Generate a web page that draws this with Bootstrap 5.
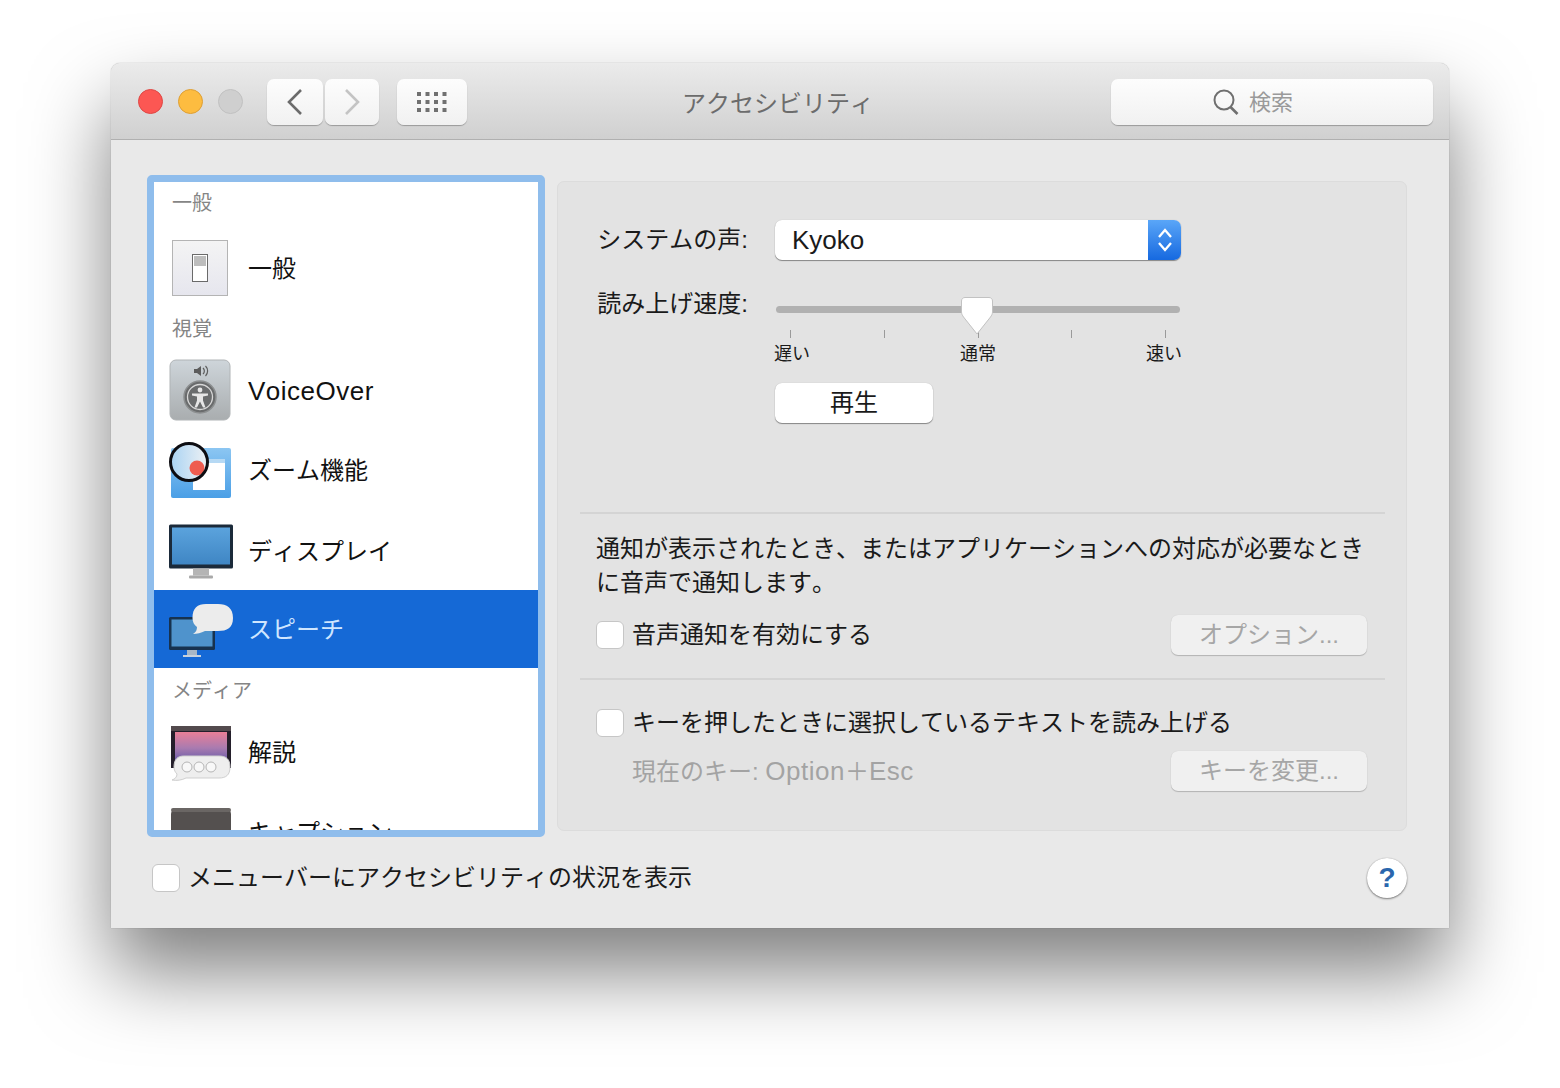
<!DOCTYPE html>
<html lang="ja">
	<head>
		<meta charset="UTF-8" />
		<meta name="viewport" content="width=device-width, initial-scale=1.0" />
		<title>アクセシビリティ</title>
		<link
			href="https://cdn.jsdelivr.net/npm/bootstrap@5.3.0/dist/css/bootstrap.min.css"
			rel="stylesheet" />
		<style>
			body {
				background: #fff;
				font-family: "Liberation Sans", "Noto Sans CJK JP", sans-serif;
				font-size: 24px;
				font-kerning: none;
				color: #1a1a1a;
				overflow: hidden;
				height: 1088px;
			}
			.mac-window {
				width: 1338px;
				height: 865px;
				margin: 63px 0 0 111px;
				background: #e9e9e9;
				border-radius: 9px 9px 0 0;
				box-shadow: 0 44px 80px rgba(0, 0, 0, 0.5), 0 0 1px rgba(0, 0, 0, 0.45);
			}
			.mac-titlebar {
				height: 77px;
				padding: 16px 16px 0 27px;
				border-radius: 9px 9px 0 0;
				background: linear-gradient(#ebebeb, #d0d0d0);
				border-bottom: 1px solid #b0b0b0;
			}
			.light {
				width: 25px;
				height: 25px;
				border-radius: 50%;
				margin-top: 10px;
				margin-right: 15px;
			}
			.light-red { background: #fc5753; border: 1px solid #df4744; }
			.light-yellow { background: #fdbc40; border: 1px solid #de9f34; }
			.light-off { background: #cfcfcf; border: 1px solid #c1c1c1; }
			.tool-btn {
				height: 46px;
				background: linear-gradient(#fdfdfd, #f1f1f1);
				border-radius: 7px;
				box-shadow: 0 1px 1px rgba(0, 0, 0, 0.28);
			}
			.tool-back { width: 56px; margin-left: 9px; }
			.tool-forward { width: 54px; margin-left: 2px; }
			.tool-grid { width: 70px; margin-left: 18px; }
			.win-title {
				padding-right: 22px;
				line-height: 50px;
				color: #6c6c6c;
			}
			.tool-search {
				width: 322px;
				padding-right: 38px;
				color: #9a9a9a;
				font-size: 22px;
				gap: 10px;
			}
			.win-body {
				padding: 35px 41px 0 36px;
			}
			.cat-box {
				width: 398px;
				height: 662px;
				border: 7px solid #8fbdec;
				border-radius: 5px;
				background: #fff;
				overflow: hidden;
			}
			.cat-head {
				font-size: 20px;
				color: #858585;
				padding-left: 18px;
				height: 42px;
				line-height: 42px;
			}
			.cat-head-first { height: 46px; line-height: 42px; }
			.cat-head-media { height: 44px; line-height: 46px; }
			.list-group-item.cat-row {
				height: 80px;
				padding: 0 0 0 14px;
				border: 0;
				border-radius: 0;
				gap: 14px;
				font-size: 24px;
				color: #111;
			}
			.list-group-item.cat-row.cat-row-tall {
				height: 81px;
			}
			.cat-row span {
				padding-top: 2px;
			}
			.list-group-item.cat-row.active {
				height: 78px;
				background: #1569d6;
				color: #cfe6ff;
			}
			.cat-icon {
				width: 66px;
				height: 66px;
				flex: none;
			}
			.latin-word {
				font-size: 26px;
				letter-spacing: 0.5px;
			}
			.pref-panel {
				width: 850px;
				height: 650px;
				margin: 6px 0 0 12px;
				padding: 38px 21px 0 22px;
				background: #e3e3e3;
				border: 1px solid #dcdcdc;
				border-radius: 7px;
			}
			.pref-block {
				padding: 0 18px 0 16px;
			}
			.pref-label {
				width: 152px;
				margin-right: 27px;
				text-align: right;
				line-height: 40px;
				flex: none;
				white-space: nowrap;
			}
			.voice-select {
				width: 406px;
				height: 40px;
				background: #fff;
				border-radius: 7px;
				box-shadow: 0 1px 1px rgba(0, 0, 0, 0.4), 0 0 1px rgba(0, 0, 0, 0.2);
				overflow: hidden;
				padding-left: 17px;
				font-size: 26px;
			}
			.voice-arrows {
				width: 33px;
				height: 40px;
				background: linear-gradient(#5aa6f8, #1669e0);
			}
			.speed-wrap {
				width: 408px;
				margin-left: -1px;
				padding-top: 22px;
				position: relative;
			}
			.speed-track {
				height: 7px;
				margin: 0 2px;
				border-radius: 4px;
				background: #b1b1b1;
			}
			.speed-thumb {
				position: absolute;
				left: 186px;
				top: 12px;
			}
			.speed-ticks {
				height: 8px;
				margin-top: 17px;
				padding: 0 16px;
			}
			.speed-tick {
				width: 1px;
				height: 8px;
				background: #9a9a9a;
			}
			.speed-labels {
				font-size: 18px;
				line-height: 24px;
				margin-top: 4px;
			}
			.plain-btn {
				height: 40px;
				padding: 0;
				background: #fff;
				border: 0;
				border-radius: 7px;
				box-shadow: 0 1px 1px rgba(0, 0, 0, 0.4), 0 0 1px rgba(0, 0, 0, 0.2);
				font-size: 24px;
				line-height: 38px;
				color: #1a1a1a;
			}
			.play-btn {
				width: 158px;
				margin: 17px 0 0 179px;
			}
			.plain-btn.off-btn {
				width: 196px;
				background: #f0f0f0;
				color: #a6a6a6;
				opacity: 1;
				box-shadow: 0 1px 1px rgba(0, 0, 0, 0.2), 0 0 1px rgba(0, 0, 0, 0.12);
			}
			.pref-rule {
				height: 2px;
				background: #d4d4d4;
			}
			.rule-top { margin-top: 89px; }
			.rule-mid { margin: 23px 0 23px; }
			.notice-text {
				line-height: 34px;
				padding-top: 18px;
				margin-bottom: 15px;
			}
			.check-row {
				height: 40px;
				gap: 8px;
			}
			.form-check-input.mac-check {
				width: 28px;
				height: 28px;
				margin: 0;
				flex: none;
				border-radius: 6px;
				border: 1px solid #c6c6c6;
				background-color: #fff;
			}
			.key-row {
				margin-top: 8px;
				padding-left: 36px;
				color: #a3a3a3;
			}
			.win-foot {
				padding: 0 42px 0 41px;
				margin-top: 20px;
				height: 42px;
			}
			.help-btn {
				width: 40px;
				height: 40px;
				border-radius: 50%;
				background: #fff;
				box-shadow: 0 1px 2px rgba(0, 0, 0, 0.45), 0 0 1px rgba(0, 0, 0, 0.3);
				color: #2a66ad;
				font-size: 28px;
				font-weight: 700;
			}
		</style>
	</head>
	<body>
		<div class="mac-window">
			<div class="mac-titlebar d-flex">
				<div class="light light-red"></div>
				<div class="light light-yellow"></div>
				<div class="light light-off"></div>
				<div class="tool-btn tool-back d-flex align-items-center justify-content-center">
					<svg width="18" height="28" viewBox="0 0 18 28"><path d="M15 2 3 14l12 12" fill="none" stroke="#6b6b6b" stroke-width="2.6" /></svg>
				</div>
				<div class="tool-btn tool-forward d-flex align-items-center justify-content-center">
					<svg width="18" height="28" viewBox="0 0 18 28"><path d="m3 2 12 12L3 26" fill="none" stroke="#c4c4c4" stroke-width="2.6" /></svg>
				</div>
				<div class="tool-btn tool-grid d-flex align-items-center justify-content-center">
					<svg width="30" height="22" viewBox="0 0 30 22" fill="#707070">
						<rect x="0" y="1" width="4" height="4" /><rect x="8.5" y="1" width="4" height="4" /><rect x="17" y="1" width="4" height="4" /><rect x="25.500" y="1" width="4" height="4" />
						<rect x="0" y="9" width="4" height="4" /><rect x="8.5" y="9" width="4" height="4" /><rect x="17" y="9" width="4" height="4" /><rect x="25.500" y="9" width="4" height="4" />
						<rect x="0" y="17" width="4" height="4" /><rect x="8.5" y="17" width="4" height="4" /><rect x="17" y="17" width="4" height="4" /><rect x="25.500" y="17" width="4" height="4" />
					</svg>
				</div>
				<div class="win-title flex-fill text-center">アクセシビリティ</div>
				<div class="tool-btn tool-search d-flex align-items-center justify-content-center">
					<svg width="26" height="26" viewBox="0 0 26 26"><circle cx="11" cy="11" r="9.500" fill="none" stroke="#6f6f6f" stroke-width="2" /><path d="m17.500 18 7 7" stroke="#6f6f6f" stroke-width="2.600" /></svg>
					<span>検索</span>
				</div>
			</div>

			<div class="win-body d-flex">
				<div class="cat-box">
					<div class="cat-head cat-head-first">一般</div>
					<div class="list-group list-group-flush">
						<div class="list-group-item cat-row d-flex align-items-center">
							<svg class="cat-icon" viewBox="0 0 66 66">
								<defs><linearGradient id="g1" x1="0" y1="0" x2="0" y2="1"><stop offset="0" stop-color="#f4f4f4" /><stop offset="1" stop-color="#e6e6ee" /></linearGradient></defs>
								<rect x="4.500" y="5.500" width="55" height="55" fill="url(#g1)" stroke="#b4b4b4" />
								<rect x="24.500" y="19.500" width="15" height="27" fill="#fff" stroke="#6a6a6a" />
								<rect x="26" y="21" width="12" height="10" fill="#bdbdbd" />
							</svg>
							<span>一般</span>
						</div>
					</div>
					<div class="cat-head">視覚</div>
					<div class="list-group list-group-flush">
						<div class="list-group-item cat-row d-flex align-items-center">
							<svg class="cat-icon" viewBox="0 0 66 66">
								<defs><linearGradient id="g2" x1="0" y1="0" x2="0" y2="1"><stop offset="0" stop-color="#ced5da" /><stop offset="1" stop-color="#a9adaf" /></linearGradient></defs>
								<g transform="translate(-1 0)">
									<rect x="3" y="3" width="60" height="60" rx="6" fill="url(#g2)" stroke="#b0b4b6" />
									<path d="M27 12h3l4-3v10l-4-3h-3z" fill="#5c5c5c" />
									<path d="M36 11a4 4 0 0 1 0 6M38.500 9a7 7 0 0 1 0 10" fill="none" stroke="#5c5c5c" stroke-width="1.200" />
									<circle cx="33" cy="40" r="16" fill="#6a6c6d" stroke="#8c8f90" stroke-width="1.500" />
									<circle cx="33" cy="40" r="12.500" fill="none" stroke="#d8d8d8" stroke-width="1.300" />
									<circle cx="33" cy="33" r="2.400" fill="#e6e6e6" />
									<path d="M25 36.500h16v2l-5 1v4l2.500 7H36l-3-6-3 6h-2.500L30 43.500v-4l-5-1z" fill="#e6e6e6" />
								</g>
							</svg>
							<span class="latin-word">VoiceOver</span>
						</div>
						<div class="list-group-item cat-row d-flex align-items-center">
							<svg class="cat-icon" viewBox="0 0 66 66">
								<defs>
									<linearGradient id="g3" x1="0" y1="0" x2="0" y2="1"><stop offset="0" stop-color="#8cc6f2" /><stop offset="1" stop-color="#4a9fe6" /></linearGradient>
									<linearGradient id="g4" x1="0" y1="0" x2="1" y2="0"><stop offset="0" stop-color="#a9d3f3" /><stop offset="1" stop-color="#eef1f4" /></linearGradient>
								</defs>
								<rect x="3" y="11" width="60" height="50" rx="2" fill="url(#g3)" />
								<rect x="25" y="25" width="32" height="28" fill="#fff" />
								<rect x="25" y="22" width="32" height="4" fill="#b6d9f4" />
								<circle cx="21" cy="25" r="18.500" fill="url(#g4)" />
								<circle cx="29" cy="31" r="7.500" fill="#ee5c50" />
								<circle cx="21" cy="25" r="18.500" fill="none" stroke="#0d0d12" stroke-width="3" />
							</svg>
							<span>ズーム機能</span>
						</div>
						<div class="list-group-item cat-row cat-row-tall d-flex align-items-center">
							<svg class="cat-icon" viewBox="0 0 66 66">
								<defs><linearGradient id="g5" x1="0" y1="0" x2="0" y2="1"><stop offset="0" stop-color="#5ba3dd" /><stop offset="1" stop-color="#3f86c4" /></linearGradient></defs>
								<g transform="translate(0 2.500)">
									<rect x="1" y="4" width="64" height="44" rx="1.500" fill="#1b2a3a" />
									<rect x="4" y="7" width="58" height="37" fill="url(#g5)" />
									<rect x="25" y="48" width="16" height="7" fill="#b5b5b5" />
									<rect x="21" y="55" width="24" height="3" rx="1" fill="#a9a9a9" />
								</g>
							</svg>
							<span>ディスプレイ</span>
						</div>
						<div class="list-group-item cat-row active d-flex align-items-center">
							<svg class="cat-icon" viewBox="0 0 66 66">
								<rect x="1" y="21" width="46" height="33" rx="1.500" fill="#17324f" />
								<rect x="3.500" y="23.500" width="41" height="27" fill="#4f93cc" />
								<rect x="19" y="54" width="10" height="5" fill="#a7b7c6" />
								<rect x="15" y="59" width="18" height="2" fill="#c8d2dc" />
								<path d="M38 8h12c9 0 15 4 15 14s-6 13-15 13H37c-4 2-8 3-12 3 3-2 4-4 4-7-3-2-4.500-5-4.500-9 0-10 5-14 13.500-14z" fill="#ececec" />
							</svg>
							<span>スピーチ</span>
						</div>
					</div>
					<div class="cat-head cat-head-media">メディア</div>
					<div class="list-group list-group-flush">
						<div class="list-group-item cat-row d-flex align-items-center">
							<svg class="cat-icon" viewBox="0 0 66 66">
								<defs><linearGradient id="g6" x1="0" y1="0" x2="0" y2="1"><stop offset="0" stop-color="#e97f97" /><stop offset="0.5" stop-color="#a97bb0" /><stop offset="1" stop-color="#5b55a8" /></linearGradient></defs>
								<g transform="translate(0 3)">
									<rect x="3" y="4" width="60" height="42" fill="#241f2b" />
									<rect x="3" y="4" width="60" height="5" fill="#534a4d" />
									<rect x="7" y="10" width="52" height="32" fill="url(#g6)" />
									<path d="M16 34h35c7 0 11 3 11 11s-4 11-11 11H18c-4 2-9 3-14 2 3-1 5-3 5-6-2-2-3-4-3-7 0-8 4-11 10-11z" fill="#eeeeee" stroke="#cfcfcf" />
									<circle cx="19" cy="45" r="5" fill="#f8f8f8" stroke="#b5b5b5" />
									<circle cx="31" cy="45" r="5" fill="#f8f8f8" stroke="#b5b5b5" />
									<circle cx="43" cy="45" r="5" fill="#f8f8f8" stroke="#b5b5b5" />
								</g>
							</svg>
							<span>解説</span>
						</div>
						<div class="list-group-item cat-row d-flex align-items-center">
							<svg class="cat-icon" viewBox="0 0 66 66">
								<rect x="3" y="9" width="60" height="60" rx="6" fill="#54504f" />
								<rect x="3" y="9" width="60" height="4" rx="2" fill="#6a6664" />
							</svg>
							<span>キャプション</span>
						</div>
					</div>
				</div>

				<div class="pref-panel">
					<div class="pref-block">
						<div class="d-flex align-items-center">
							<div class="pref-label">システムの声:</div>
							<div class="voice-select d-flex align-items-center justify-content-between">
								<span>Kyoko</span>
								<div class="voice-arrows d-flex align-items-center justify-content-center">
									<svg width="18" height="30" viewBox="0 0 18 30"><path d="m3 12 6-7 6 7M3 18l6 7 6-7" fill="none" stroke="#fff" stroke-width="2.300" /></svg>
								</div>
							</div>
						</div>
						<div class="d-flex mt-4">
							<div class="pref-label">読み上げ速度:</div>
							<div class="speed-wrap">
								<div class="speed-track"></div>
								<svg class="speed-thumb" width="34" height="40" viewBox="0 0 34 40">
									<path d="M5 1.500h24c2 0 3.500 1.500 3.500 3.500v11c0 2-1 3.500-2 5L17 38 3.500 21c-1-1.500-2-3-2-5V5c0-2 1.500-3.500 3.500-3.500z" fill="#fff" stroke="#c2c2c2" />
								</svg>
								<div class="speed-ticks d-flex justify-content-between">
									<div class="speed-tick"></div>
									<div class="speed-tick"></div>
									<div class="speed-tick"></div>
									<div class="speed-tick"></div>
									<div class="speed-tick"></div>
								</div>
								<div class="speed-labels d-flex justify-content-between">
									<span>遅い</span>
									<span>通常</span>
									<span>速い</span>
								</div>
							</div>
						</div>
						<button type="button" class="btn plain-btn play-btn d-block">再生</button>
					</div>
					<div class="pref-rule rule-top"></div>
					<div class="pref-block">
						<p class="notice-text">通知が表示されたとき、またはアプリケーションへの対応が必要なときに音声で通知します。</p>
						<div class="check-row d-flex align-items-center">
							<input class="form-check-input mac-check" type="checkbox" />
							<span class="flex-fill">音声通知を有効にする</span>
							<button type="button" class="btn plain-btn off-btn" disabled>オプション...</button>
						</div>
					</div>
					<div class="pref-rule rule-mid"></div>
					<div class="pref-block">
						<div class="check-row d-flex align-items-center">
							<input class="form-check-input mac-check" type="checkbox" />
							<span>キーを押したときに選択しているテキストを読み上げる</span>
						</div>
						<div class="key-row d-flex align-items-center justify-content-between">
							<span>現在のキー: <span class="latin-word">Option</span>＋<span class="latin-word">Esc</span></span>
							<button type="button" class="btn plain-btn off-btn" disabled>キーを変更...</button>
						</div>
					</div>
				</div>
			</div>

			<div class="win-foot d-flex align-items-center justify-content-between">
				<div class="check-row d-flex align-items-center">
					<input class="form-check-input mac-check" type="checkbox" />
					<span>メニューバーにアクセシビリティの状況を表示</span>
				</div>
				<div class="help-btn d-flex align-items-center justify-content-center">?</div>
			</div>
		</div>
		<script src="https://cdn.jsdelivr.net/npm/bootstrap@5.3.0/dist/js/bootstrap.bundle.min.js"></script>
	</body>
</html>
